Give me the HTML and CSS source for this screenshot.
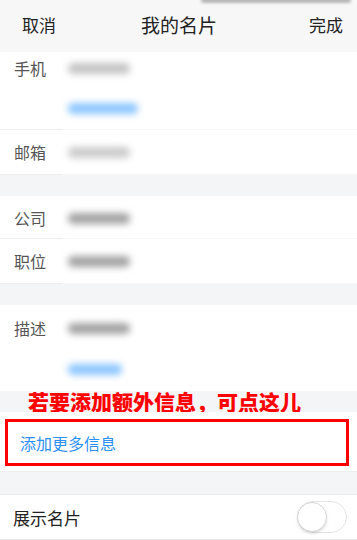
FILE: index.html
```html
<!DOCTYPE html>
<html lang="zh">
<head>
<meta charset="utf-8">
<link rel="stylesheet" href="styles.css">
</head>
<body>
<div class="page">
  <header class="nav">
    <div class="status"><span class="blur-status"></span></div>
    <div class="nav-row">
      <span class="nav-btn">取消</span>
      <span class="nav-title">我的名片</span>
      <span class="nav-btn">完成</span>
    </div>
  </header>

  <section class="group">
    <div class="row row-phone">
      <div class="label">手机</div>
      <div class="value">
        <div class="line"><span class="blur gray w62"></span></div>
        <div class="line line2"><span class="blur blue w70"></span></div>
      </div>
    </div>
    <div class="row row-std">
      <div class="label">邮箱</div>
      <div class="value"><div class="line"><span class="blur light w62"></span></div></div>
    </div>
  </section>

  <div class="gap"></div>

  <section class="group">
    <div class="row row-company">
      <div class="label">公司</div>
      <div class="value"><div class="line"><span class="blur dark w62"></span></div></div>
    </div>
    <div class="row row-std">
      <div class="label">职位</div>
      <div class="value"><div class="line"><span class="blur dark w62"></span></div></div>
    </div>
  </section>

  <div class="gap"></div>

  <section class="group">
    <div class="row row-desc">
      <div class="label">描述</div>
      <div class="value">
        <div class="line"><span class="blur dark w62"></span></div>
        <div class="line line2b"><span class="blur blue w54"></span></div>
      </div>
    </div>
  </section>

  <div class="gap gap-note"><span class="note">若要添加额外信息，可点这儿</span></div>

  <section class="group">
    <div class="add-row">
      <div class="add-box">添加更多信息</div>
    </div>
  </section>

  <div class="gap gap-last"></div>

  <section class="group">
    <div class="switch-row">
      <span class="switch-label">展示名片</span>
      <span class="toggle"><span class="knob"></span></span>
    </div>
  </section>
</div>
</body>
</html>
```

FILE: styles.css
```css
* { box-sizing: border-box; }
html, body {
  margin: 0;
  padding: 0;
  background: #f4f5f7;
}
body {
  font-family: "Noto Sans CJK SC", "Noto Sans", sans-serif;
  width: 357px;
  height: 540px;
  overflow: hidden;
}
.page { display: flex; flex-direction: column; }

.nav {
  height: 52px;
  background: #f7f7f8;
  display: flex;
  flex-direction: column;
}
.status {
  height: 6px;
  display: flex;
  justify-content: flex-end;
  padding-right: 6px;
  overflow: hidden;
}
.blur-status {
  width: 150px;
  height: 6px;
  margin-top: -3px;
  background: #9a9a9a;
  border-radius: 3px;
  filter: blur(1.5px);
  opacity: 0.7;
}
.nav-row {
  flex: 1;
  display: flex;
  align-items: center;
  justify-content: space-between;
  padding: 0 14px 8px 22px;
}
.nav-btn {
  font-size: 17px;
  color: #222;
  line-height: 24px;
}
.nav-title {
  font-size: 19px;
  color: #222;
  line-height: 26px;
  margin-right: 7px;
}

.group { background: #fff; }

.row { display: flex; }
.label {
  width: 62px;
  flex: none;
  text-align: right;
  padding-right: 16px;
  font-size: 16px;
  line-height: 22px;
  color: #555;
  border-bottom: 1px solid #ededed;
}
.value {
  flex: 1;
  display: flex;
  flex-direction: column;
  padding-left: 6px;
  border-bottom: 1px solid #f7f7f7;
}
.line { height: 22px; display: flex; align-items: center; }
.blur {
  height: 11px;
  border-radius: 5px;
  filter: blur(3.5px);
}
.blur.gray { background: #c4c4c4; }
.blur.light { background: #cbcbcb; }
.blur.dark { background: #a2a2a2; }
.blur.blue { background: #8cc6ff; }
.w62 { width: 62px; }
.w70 { width: 70px; }
.w54 { width: 54px; }

.row-phone .label { padding-top: 5px; height: 78px; }
.row-phone .value { padding-top: 5px; height: 78px; }
.line2 { margin-top: 18px; }

.row-std .label, .row-std .value { height: 45px; padding-top: 11px; }
.row-company .label, .row-company .value { height: 43px; padding-top: 11px; }

.row-desc .label, .row-desc .value { height: 86px; padding-top: 12px; border-bottom: none; }
.line2b { margin-top: 19px; }

.gap { height: 21px; background: #f4f5f7; }
.gap-note {
  display: flex;
  align-items: center;
  padding-left: 28px;
  height: 21px;
  overflow: visible;
}
.note {
  font-size: 21px;
  font-weight: 900;
  color: #ff0000;
  line-height: 21px;
  white-space: nowrap;
}
.gap-last { height: 22px; }

.add-row {
  height: 60px;
  padding: 7px 8px 6px 5px;
  border-bottom: 1px solid #ededed;
}
.add-box {
  height: 47px;
  border: 3px solid #ff0000;
  display: flex;
  align-items: center;
  padding-left: 12px;
  font-size: 16px;
  color: #2b8ff3;
}

.switch-row {
  height: 46px;
  display: flex;
  align-items: center;
  justify-content: space-between;
  padding: 0 10px 0 13px;
  border-top: 1px solid #ececec;
  border-bottom: 1px solid #ececec;
}
.switch-label {
  font-size: 17px;
  color: #222;
}
.toggle {
  width: 50px;
  height: 32px;
  border: 1.5px solid #e4e4e4;
  border-radius: 16px;
  background: #fff;
  display: flex;
  align-items: center;
}
.knob {
  width: 30px;
  height: 30px;
  border-radius: 50%;
  background: #fff;
  border: 1px solid #d6d6d6;
  box-shadow: 0 2px 3px rgba(0,0,0,0.12);
  margin-left: -1px;
}
```
